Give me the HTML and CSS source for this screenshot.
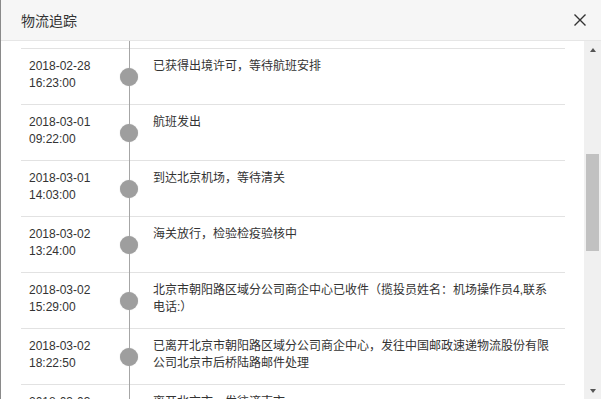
FILE: index.html
```html
<!DOCTYPE html>
<html lang="zh-CN">
<head>
    <meta charset="UTF-8">
    <meta name="viewport" content="width=device-width, initial-scale=1.0">
    <title>物流追踪</title>
    <link rel="stylesheet" href="styles.css">
</head>
<body>
    <div class="dialog">
        <div class="dialog-header">
            <span class="dialog-title">物流追踪</span>
            <button class="dialog-close" aria-label="关闭">
                <svg width="12" height="12" viewBox="0 0 12 12">
                    <path d="M0.5 0.5 L11.5 11.5 M11.5 0.5 L0.5 11.5" stroke="#333" stroke-width="1.4" fill="none"/>
                </svg>
            </button>
        </div>

        <div class="dialog-body">
            <div class="track-list">
                <div class="track-gap"></div>

                <div class="track-row">
                    <div class="track-time">2018-02-28<br>16:23:00</div>
                    <div class="track-axis"><span class="track-dot"></span></div>
                    <div class="track-desc">已获得出境许可，等待航班安排</div>
                </div>
                <div class="track-row">
                    <div class="track-time">2018-03-01<br>09:22:00</div>
                    <div class="track-axis"><span class="track-dot"></span></div>
                    <div class="track-desc">航班发出</div>
                </div>
                <div class="track-row">
                    <div class="track-time">2018-03-01<br>14:03:00</div>
                    <div class="track-axis"><span class="track-dot"></span></div>
                    <div class="track-desc">到达北京机场，等待清关</div>
                </div>
                <div class="track-row">
                    <div class="track-time">2018-03-02<br>13:24:00</div>
                    <div class="track-axis"><span class="track-dot"></span></div>
                    <div class="track-desc">海关放行，检验检疫验核中</div>
                </div>
                <div class="track-row">
                    <div class="track-time">2018-03-02<br>15:29:00</div>
                    <div class="track-axis"><span class="track-dot"></span></div>
                    <div class="track-desc">北京市朝阳路区域分公司商企中心已收件（揽投员姓名：机场操作员4,联系电话:）</div>
                </div>
                <div class="track-row">
                    <div class="track-time">2018-03-02<br>18:22:50</div>
                    <div class="track-axis"><span class="track-dot"></span></div>
                    <div class="track-desc">已离开北京市朝阳路区域分公司商企中心，发往中国邮政速递物流股份有限公司北京市后桥陆路邮件处理</div>
                </div>
                <div class="track-row">
                    <div class="track-time">2018-03-03<br>02:10:00</div>
                    <div class="track-axis"><span class="track-dot"></span></div>
                    <div class="track-desc">离开北京市，发往济南市</div>
                </div>
            </div>

            <div class="scrollbar">
                <span class="scroll-arrow up"></span>
                <div class="scroll-track">
                    <div class="scroll-thumb"></div>
                </div>
                <span class="scroll-arrow down"></span>
            </div>
        </div>
    </div>
</body>
</html>
```

FILE: styles.css
```css
/* Logistics tracking dialog */
html, body {
    margin: 0;
    padding: 0;
}

body {
    font-family: "Liberation Sans", Arial, "Noto Sans CJK SC", sans-serif;
    color: #333;
    background-color: #fff;
}

.dialog {
    width: 601px;
    height: 399px;
    box-sizing: border-box;
    border-left: 1px solid #8a8a8a;
    display: flex;
    flex-direction: column;
    overflow: hidden;
}

.dialog-header {
    height: 41px;
    flex: none;
    box-sizing: border-box;
    background-color: #f6f6f6;
    border-bottom: 1px solid #e6e6e6;
    display: flex;
    align-items: center;
    justify-content: space-between;
    padding: 0 13px 0 20px;
}

.dialog-title {
    font-size: 14px;
    color: #333;
}

.dialog-close {
    background: none;
    border: none;
    padding: 2px;
    width: 16px;
    height: 16px;
    display: flex;
    align-items: center;
    justify-content: center;
    cursor: pointer;
}

.dialog-body {
    flex: 1;
    display: flex;
    min-height: 0;
}

.track-list {
    flex: 1;
    position: relative;
    overflow: hidden;
    padding: 0 19px 0 20px;
}

/* the timeline axis */
.track-list::before {
    content: "";
    position: absolute;
    top: 0;
    bottom: 0;
    left: 128px;
    width: 1px;
    background-color: #a6a6a6;
}

.track-gap {
    height: 7px;
}

.track-row {
    display: grid;
    grid-template-columns: 96px 24px 1fr;
    height: 56px;
    box-sizing: border-box;
    border-top: 1px solid #e2e2e2;
    font-size: 12px;
    line-height: 17px;
}

.track-time {
    padding: 9px 0 0 8px;
}

.track-axis {
    display: flex;
    align-items: center;
    justify-content: center;
}

.track-dot {
    position: relative;
    z-index: 1;
    width: 18px;
    height: 18px;
    border-radius: 50%;
    background-color: #9e9e9e;
    box-shadow: 0 0 1px #bbb;
}

.track-desc {
    padding: 9px 8px 0 12px;
}

.scrollbar {
    width: 17px;
    flex: none;
    background-color: #f0f0f0;
    display: flex;
    flex-direction: column;
    align-items: center;
}

.scroll-arrow {
    width: 0;
    height: 0;
    border-left: 3.5px solid transparent;
    border-right: 3.5px solid transparent;
    flex: none;
}

.scroll-arrow.up {
    border-bottom: 4px solid #555;
    margin: 7px 0 6px;
}

.scroll-arrow.down {
    border-top: 4px solid #555;
    margin: 6px 0 6px;
}

.scroll-track {
    flex: 1;
    width: 100%;
    display: flex;
    justify-content: center;
}

.scroll-thumb {
    width: 13px;
    height: 97px;
    margin-top: 96px;
    background-color: #c1c1c1;
}
```
